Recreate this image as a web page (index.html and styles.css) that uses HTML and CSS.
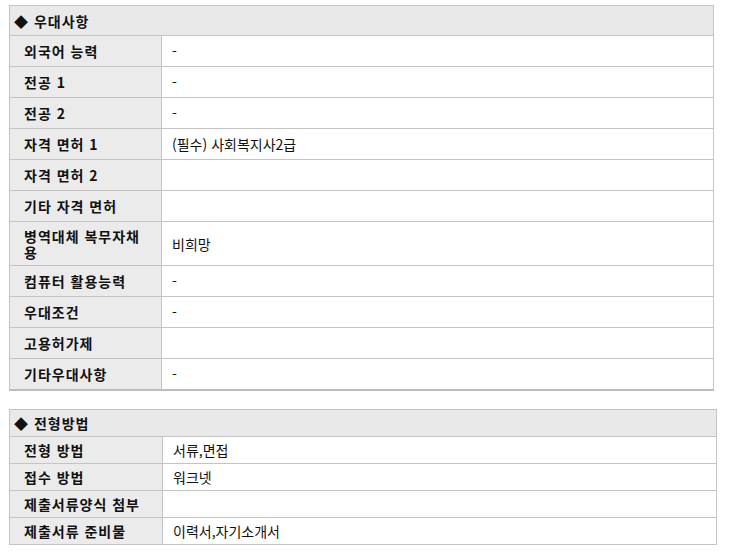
FILE: index.html
```html
<!DOCTYPE html>
<html lang="ko">
<head>
<meta charset="utf-8">
<link rel="stylesheet" href="styles.css">
</head>
<body>
<div class="page">
  <table class="info info-pref">
    <colgroup><col class="col-label"><col></colgroup>
    <tr class="head"><td colspan="2">◆ 우대사항</td></tr>
    <tr><th>외국어 능력</th><td>-</td></tr>
    <tr><th>전공 1</th><td>-</td></tr>
    <tr><th>전공 2</th><td>-</td></tr>
    <tr><th>자격 면허 1</th><td>(필수) 사회복지사2급</td></tr>
    <tr><th>자격 면허 2</th><td></td></tr>
    <tr><th>기타 자격 면허</th><td></td></tr>
    <tr class="tall"><th>병역대체 복무자채용</th><td>비희망</td></tr>
    <tr><th>컴퓨터 활용능력</th><td>-</td></tr>
    <tr><th>우대조건</th><td>-</td></tr>
    <tr><th>고용허가제</th><td></td></tr>
    <tr class="last"><th>기타우대사항</th><td>-</td></tr>
  </table>

  <table class="info info-sel">
    <colgroup><col class="col-label2"><col></colgroup>
    <tr class="head"><td colspan="2">◆ 전형방법</td></tr>
    <tr><th>전형 방법</th><td>서류,면접</td></tr>
    <tr><th>접수 방법</th><td>워크넷</td></tr>
    <tr><th>제출서류양식 첨부</th><td></td></tr>
    <tr><th>제출서류 준비물</th><td>이력서,자기소개서</td></tr>
  </table>
</div>
</body>
</html>
```

FILE: styles.css
```css
html, body {
  margin: 0;
  padding: 0;
  background: #ffffff;
}

.page {
  padding: 5px 0 0 9px;
  font-family: "Noto Sans CJK KR", "Noto Sans", sans-serif;
  font-size: 14px;
  color: #111111;
}

.info {
  border-collapse: collapse;
  table-layout: fixed;
}

.info-pref {
  width: 705px;
}

.info-sel {
  width: 708px;
  margin-top: 18px;
}

.col-label {
  width: 152px;
}

.col-label2 {
  width: 153px;
}

.info th,
.info td {
  border: 1px solid #c4c4c4;
  padding: 0 10px 0 10px;
  text-align: left;
  vertical-align: middle;
  line-height: 16px;
}

.info th {
  padding-left: 14px;
  padding-right: 12px;
  background: #ebebeb;
  font-weight: bold;
  letter-spacing: 1px;
}

.info td {
  font-weight: normal;
}

.info-pref th,
.info-pref td {
  height: 30px;
}

.info-pref .head td {
  height: 29px;
}

.info-pref .tall th,
.info-pref .tall td {
  height: 43px;
}

.info-pref .last th,
.info-pref .last td {
  border-bottom: 2px solid #bdbdbd;
}

.info-sel th,
.info-sel td {
  height: 26px;
}

.info .head td {
  background: #e9e9e9;
  font-weight: bold;
  padding-left: 4px;
  letter-spacing: 1px;
}
```
